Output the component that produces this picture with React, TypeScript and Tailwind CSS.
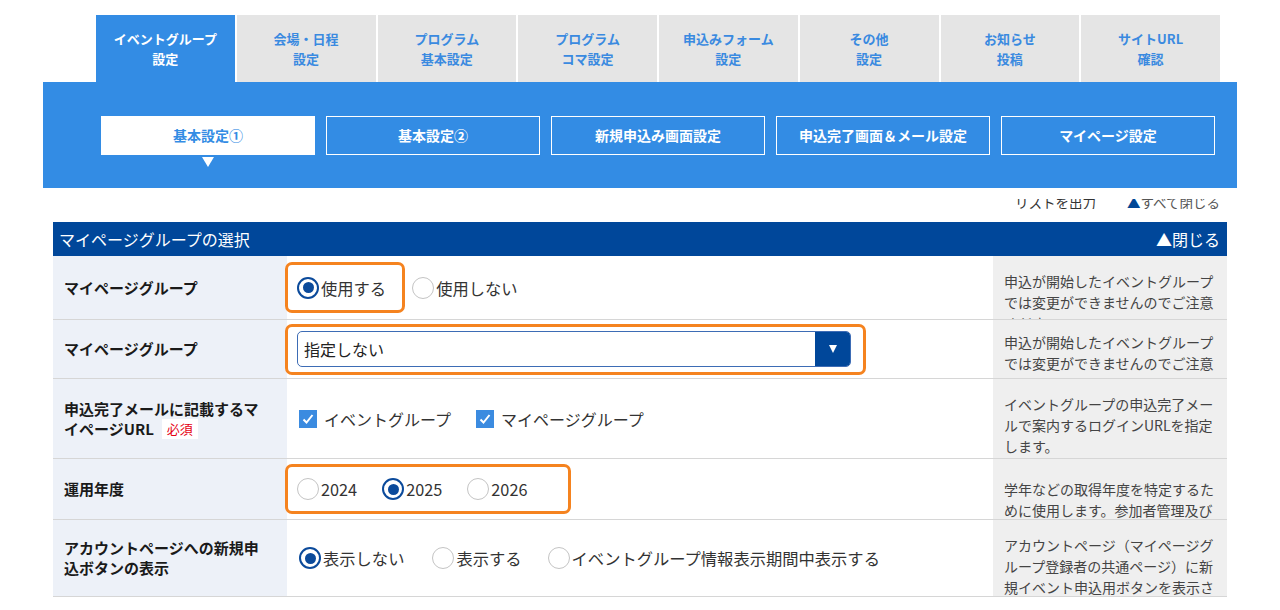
import React from "react";

const FONT = { fontFamily: '"Noto Sans CJK JP", "Noto Sans", sans-serif' };

const tabs: [string, string][] = [
  ["イベントグループ", "設定"],
  ["会場・日程", "設定"],
  ["プログラム", "基本設定"],
  ["プログラム", "コマ設定"],
  ["申込みフォーム", "設定"],
  ["その他", "設定"],
  ["お知らせ", "投稿"],
  ["サイトURL", "確認"],
];

const subs = ["基本設定①", "基本設定②", "新規申込み画面設定", "申込完了画面＆メール設定", "マイページ設定"];

function Radio({ on, label, className = "" }: { on?: boolean; label: string; className?: string }) {
  return (
    <div className={"flex items-center " + className}>
      {on ? (
        <span className="w-[22px] h-[22px] rounded-full border-2 border-[#0b4a9b] bg-white flex items-center justify-center">
          <span className="w-[11px] h-[11px] rounded-full bg-[#0b4a9b]" />
        </span>
      ) : (
        <span className="w-[22px] h-[22px] rounded-full border-[1.5px] border-[#c4c4c4] bg-white" />
      )}
      <span className="ml-[2px] text-[16.3px] leading-[22px] text-[#333]">{label}</span>
    </div>
  );
}

function Check({ label, className = "" }: { label: string; className?: string }) {
  return (
    <div className={"flex items-center " + className}>
      <span className="w-[18px] h-[18px] bg-[#3b8be0] flex items-center justify-center">
        <svg width="14" height="14" viewBox="0 0 14 14">
          <polyline points="2.5,7.5 5.5,10.5 11.5,3" fill="none" stroke="white" strokeWidth="2" />
        </svg>
      </span>
      <span className="ml-[7px] text-[16px] leading-[22px] text-[#333]">{label}</span>
    </div>
  );
}

function Row({
  h,
  label,
  note,
  notePt,
  children,
}: {
  h: string;
  label: React.ReactNode;
  note: string;
  notePt: string;
  children: React.ReactNode;
}) {
  return (
    <div className={"flex border-b border-[#d6d6d6] " + h}>
      <div className="w-[234px] shrink-0 bg-[#edf1f8] flex items-center pl-[11px] pr-[4px] text-[15px] leading-[20px] font-bold text-[#1a1a1a]">
        {label}
      </div>
      <div className="flex-1 flex items-center">{children}</div>
      <div className={"w-[234px] shrink-0 bg-[#efefef] overflow-hidden pl-[11px] pr-[9px] text-[14px] leading-[21px] text-[#444] " + notePt}>
        {note}
      </div>
    </div>
  );
}

export default function App() {
  return (
    <div className="w-[1280px] h-[610px] overflow-hidden bg-white" style={FONT}>
      {/* top tabs */}
      <div className="pt-[15px] pl-[96px] pr-[60px] grid grid-cols-8 gap-x-[2px]">
        {tabs.map(([a, b], i) => (
          <div
            key={i}
            className={
              "h-[67px] flex flex-col items-center justify-center text-[13px] leading-[20px] font-bold " +
              (i === 0 ? "bg-[#338ce4] text-white" : "bg-[#e5e5e5] text-[#3a8ae0]")
            }
          >
            <span>{a}</span>
            <span>{b}</span>
          </div>
        ))}
      </div>

      {/* blue panel */}
      <div className="relative z-10 mx-[43px] h-[106px] bg-[#338ce4] pt-[34px] pl-[58px] pr-[22px] flex gap-[11px]">
        {subs.map((s, i) => (
          <div key={i} className="w-[214px] flex flex-col items-center">
            <div
              className={
                "w-full h-[39px] flex items-center justify-center text-[14px] font-bold " +
                (i === 0 ? "bg-white text-[#338ce4]" : "border-[1.5px] border-white text-white")
              }
            >
              {s}
            </div>
            {i === 0 && (
              <div className="mt-[2px] w-0 h-0 border-l-[6px] border-r-[6px] border-t-[10px] border-l-transparent border-r-transparent border-t-white" />
            )}
          </div>
        ))}
      </div>

      <div className="mt-[11px] h-[10px] overflow-hidden flex items-end justify-end pr-[60px] gap-[31px] text-[13.5px] leading-[13px]">
        <span className="underline text-[#333]">リストを出力</span>
        <span className="text-[#555]">
          <span className="text-[#004796]">▲</span>すべて閉じる
        </span>
      </div>

      {/* table */}
      <div className="mt-[13px] mx-[53px]">
        <div className="h-[34px] bg-[#00479a] flex items-center justify-between pl-[6px] pr-[7px] text-[16px] text-white">
          <span>マイページグループの選択</span>
          <span>▲閉じる</span>
        </div>

        <Row
          h="h-[64px]"
          label="マイページグループ"
          notePt="pt-[15px]"
          note="申込が開始したイベントグループでは変更ができませんのでご注意ください。"
        >
          <div className="-ml-[2px] h-[51px] border-[3px] border-[#f5831f] rounded-[7px] flex items-center pl-[9px] pr-[16px]">
            <Radio on label="使用する" />
          </div>
          <Radio label="使用しない" className="ml-[7px]" />
        </Row>

        <Row
          h="h-[59px]"
          label="マイページグループ"
          notePt="pt-[12px]"
          note="申込が開始したイベントグループでは変更ができませんのでご注意ください。"
        >
          <div className="-ml-[2px] h-[51px] w-[581px] border-[3px] border-[#f5831f] rounded-[7px] flex items-center pl-[9px] pr-[12px]">
            <div className="flex-1 h-[36px] border border-[#3d6cb5] rounded-[5px] flex items-center overflow-hidden">
              <span className="flex-1 pl-[6px] text-[16px] text-[#222]">指定しない</span>
              <span className="w-[35px] h-full bg-[#00479a] flex items-center justify-center">
                <span className="w-0 h-0 border-l-[4.5px] border-r-[4.5px] border-t-[8px] border-l-transparent border-r-transparent border-t-white" />
              </span>
            </div>
          </div>
        </Row>

        <Row
          h="h-[80px]"
          label={
            <div>
              <div>申込完了メールに記載するマ</div>
              <div className="flex items-center">
                イページURL
                <span className="ml-[8px] bg-white px-[5px] text-[13px] leading-[20px] font-normal text-[#e60012]">必須</span>
              </div>
            </div>
          }
          notePt="pt-[15px]"
          note="イベントグループの申込完了メールで案内するログインURLを指定します。"
        >
          <Check label="イベントグループ" className="ml-[12px]" />
          <Check label="マイページグループ" className="ml-[25px]" />
        </Row>

        <Row
          h="h-[61px]"
          label="運用年度"
          notePt="pt-[20px]"
          note="学年などの取得年度を特定するために使用します。参加者管理及び一斉配信の検索条件の項目となります。"
        >
          <div className="-ml-[2px] h-[50px] w-[286px] border-[3px] border-[#f5831f] rounded-[7px] flex items-center pl-[9px]">
            <Radio label="2024" />
            <Radio on label="2025" className="ml-[25px]" />
            <Radio label="2026" className="ml-[25px]" />
          </div>
        </Row>

        <Row
          h="h-[77px]"
          label={
            <div>
              <div>アカウントページへの新規申</div>
              <div>込ボタンの表示</div>
            </div>
          }
          notePt="pt-[15px]"
          note="アカウントページ（マイページグループ登録者の共通ページ）に新規イベント申込用ボタンを表示させるかを設定します。"
        >
          <Radio on label="表示しない" className="ml-[12px]" />
          <Radio label="表示する" className="ml-[28px]" />
          <Radio label="イベントグループ情報表示期間中表示する" className="ml-[26px]" />
        </Row>
      </div>
    </div>
  );
}
